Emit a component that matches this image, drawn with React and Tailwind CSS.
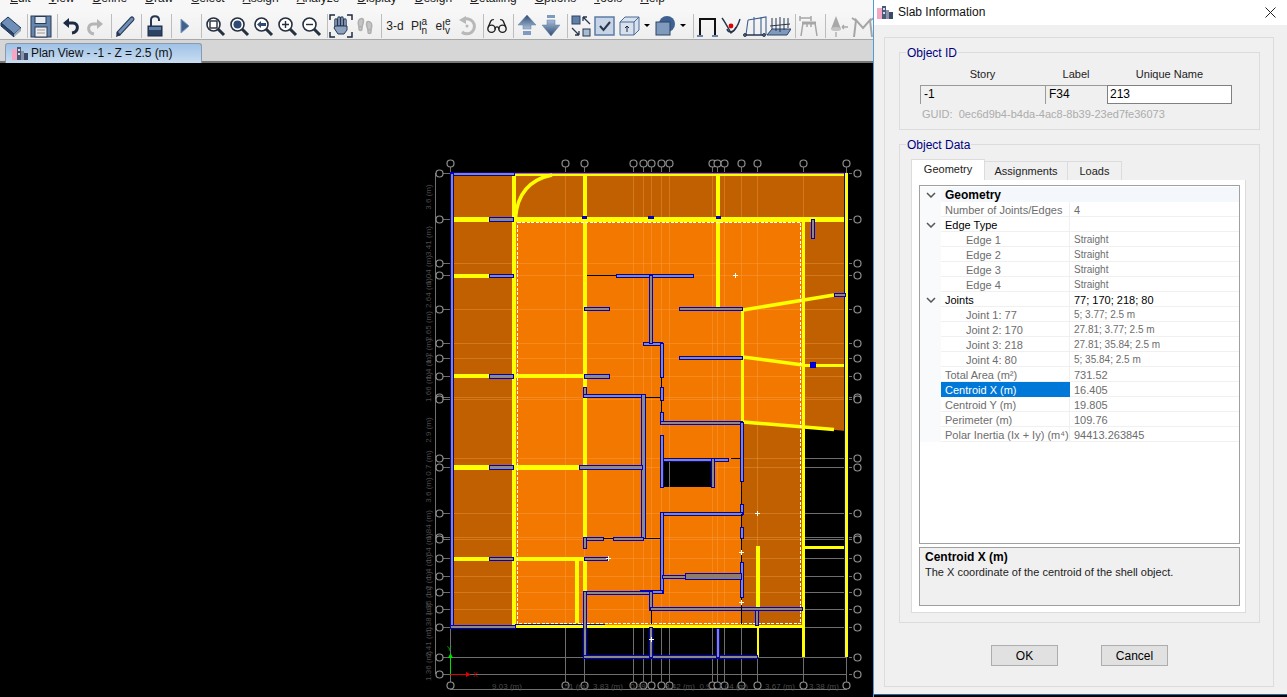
import { Footprints, Glasses } from 'lucide-react';

const font = 'font-["Liberation_Sans",Arial,sans-serif]';

const menus = ['Edit', 'View', 'Define', 'Draw', 'Select', 'Assign', 'Analyze', 'Display', 'Design', 'Detailing', 'Options', 'Tools', 'Help'];

const Sep = () => <div className="w-px h-6 ml-1 mr-px bg-[#bdbdbd] shrink-0" />;

const Tool = ({ children }) => (
  <div className="w-6 h-6 shrink-0 flex items-center justify-center text-[#26364f]">{children}</div>
);

const Ico = ({ children }) => <svg width="24" height="24" viewBox="0 0 24 24" fill="none">{children}</svg>;

const Caret = () => (
  <div className="w-3 h-6 shrink-0 flex items-center justify-center">
    <div className="w-0 h-0 border-x-[3px] border-x-transparent border-t-[3px] border-t-black" />
  </div>
);

const Glass = ({ children }) => (
  <Ico>
    <circle cx="10.5" cy="10.5" r="6.5" fill="#fff" stroke="#26303f" strokeWidth="1.6" />
    <line x1="15" y1="15" x2="21" y2="21" stroke="#26303f" strokeWidth="3" />
    {children}
  </Ico>
);

const Toolbar = () => (
  <div className="h-[27px] flex items-center -ml-px bg-gradient-to-b from-[#f7f7f7] to-[#eeeeee]">
    <Tool><Ico>
      <polygon points="2,9 9,3 22,14 15,20" fill="#6f8eb8" stroke="#1f3557" />
      <polygon points="2,9 2,12 15,23 15,20" fill="#2c456d" stroke="#1f3557" />
      <polygon points="15,20 15,23 22,17 22,14" fill="#9ab" />
    </Ico></Tool>
    <Sep />
    <Tool><Ico>
      <rect x="2" y="2" width="20" height="21" fill="#6686ae" stroke="#2a3b55" />
      <rect x="6" y="2.5" width="11" height="7" fill="#e8edf3" stroke="#2a3b55" />
      <rect x="6" y="13" width="12" height="10" fill="#eeeeee" stroke="#2a3b55" />
      <line x1="8" y1="16" x2="16" y2="16" stroke="#999" />
      <line x1="8" y1="19" x2="16" y2="19" stroke="#999" />
    </Ico></Tool>
    <Sep />
    <Tool><Ico>
      <path d="M8 9 H14 C20 9 20 18 13 19" stroke="#1d2b42" strokeWidth="3" />
      <polygon points="4,9 10,4 10,14" fill="#1d2b42" />
    </Ico></Tool>
    <Tool><Ico>
      <path d="M16 10 H10 C4 10 4 19 11 20" stroke="#b5b5b5" strokeWidth="3" />
      <polygon points="20,10 14,5 14,15" fill="#b5b5b5" />
    </Ico></Tool>
    <Sep />
    <Tool><Ico>
      <line x1="6" y1="19" x2="19" y2="5" stroke="#26364f" strokeWidth="5" strokeLinecap="round" />
      <line x1="6" y1="19" x2="19" y2="5" stroke="#6f8eb8" strokeWidth="3" strokeLinecap="round" />
      <polygon points="3,23 4,17 8,21" fill="#26364f" />
    </Ico></Tool>
    <Sep />
    <Tool><Ico>
      <path d="M8 12 V6 C8 1 16 1 16 6 V7" stroke="#26364f" strokeWidth="2" />
      <rect x="5" y="12" width="14" height="10" fill="#2d4364" stroke="#1b2a40" />
      <rect x="6" y="13" width="12" height="3" fill="#5f7fa8" />
    </Ico></Tool>
    <Sep />
    <Tool><Ico><polygon points="8,5 16,12 8,19" fill="#41628f" stroke="#7f9abd" /></Ico></Tool>
    <Sep />
    <Tool><Glass><rect x="7" y="7" width="7" height="7" stroke="#26303f" strokeWidth="1.4" /></Glass></Tool>
    <Tool><Glass><circle cx="10.5" cy="10.5" r="4" fill="#2f4a73" /></Glass></Tool>
    <Tool><Glass><polygon points="6,10.5 10,7 10,9 15,9 15,12 10,12 10,14" fill="#2f4a73" /></Glass></Tool>
    <Tool><Glass><path d="M7 10.5 H14 M10.5 7 V14" stroke="#26303f" strokeWidth="1.4" /></Glass></Tool>
    <Tool><Glass><path d="M7 10.5 H14" stroke="#26303f" strokeWidth="1.4" /></Glass></Tool>
    <Sep />
    <Tool><Ico>
      <path d="M1 6 V1 H6 M18 1 H23 V6 M1 18 V23 H6 M18 23 H23 V18" stroke="#1d2b42" strokeWidth="1.5" />
      <path d="M7 12 V6 M10 11 V4 M13 11 V4 M16 12 V6" stroke="#26364f" strokeWidth="3.4" strokeLinecap="round" />
      <path d="M7 12 V6 M10 11 V4 M13 11 V4 M16 12 V6" stroke="#8ea3c0" strokeWidth="1.6" strokeLinecap="round" />
      <path d="M6 12 H18 V16 L15 20 H9 L5 14 Z" fill="#8ea3c0" stroke="#26364f" />
    </Ico></Tool>
    <Tool><Footprints size={18} className="text-[#b0b0b0]" fill="#c4c4c4" /></Tool>
    <Sep />
    <Tool><span className="text-[12px] leading-none text-[#222]">3-d</span></Tool>
    <Tool>
      <span className="text-[12px] leading-none text-[#222]">Pl</span>
      <span className="flex flex-col text-[10px] leading-[9px] text-[#222]"><span>a</span><span>n</span></span>
    </Tool>
    <Tool>
      <span className="text-[12px] leading-none text-[#222]">el</span>
      <span className="flex flex-col text-[10px] leading-[9px] text-[#222]"><span>e</span><span>v</span></span>
    </Tool>
    <Tool><Ico>
      <path d="M8 6 A7.5 7.5 0 1 1 7 18" stroke="#b8b8b8" strokeWidth="3" />
      <polygon points="4,6 11,2 11,10" fill="#b8b8b8" />
      <circle cx="12" cy="12" r="1.5" fill="#b8b8b8" />
    </Ico></Tool>
    <Sep />
    <Tool><Glasses size={22} className="text-[#1f1f1f]" strokeWidth={1.5} /></Tool>
    <Sep />
    <Tool><Ico>
      <defs><linearGradient id="up" x1="0" y1="0" x2="0" y2="1"><stop stopColor="#2f4a73" /><stop offset="1" stopColor="#a8bdd8" /></linearGradient></defs>
      <polygon points="12,1 21,11 16,11 16,15 8,15 8,11 3,11" fill="url(#up)" stroke="#5f7fa8" strokeWidth="0.5" />
      <rect x="8" y="17" width="8" height="4" fill="#7f9abd" />
    </Ico></Tool>
    <Tool><Ico>
      <defs><linearGradient id="dn" x1="0" y1="0" x2="0" y2="1"><stop stopColor="#a8bdd8" /><stop offset="1" stopColor="#2f4a73" /></linearGradient></defs>
      <rect x="8" y="1" width="8" height="3" fill="#7f9abd" />
      <polygon points="8,6 16,6 16,11 21,11 12,22 3,11 8,11" fill="url(#dn)" stroke="#5f7fa8" strokeWidth="0.5" />
    </Ico></Tool>
    <Sep />
    <Tool><Ico>
      <rect x="3" y="2" width="8" height="8" fill="#5f7fa8" stroke="#2d4364" />
      <rect x="14" y="15" width="7" height="7" fill="#a9bbd2" stroke="#26364f" />
      <path d="M14 3 L21 10 M14 3 H18 M14 3 V7 M3 14 L10 21 M10 21 H6 M10 21 V17" stroke="#26364f" strokeWidth="1.3" />
    </Ico></Tool>
    <Tool><Ico>
      <rect x="2" y="3" width="19" height="18" fill="#c7d4e6" stroke="#5c7ca6" strokeWidth="1.5" />
      <path d="M7 12 L10.5 16 L17 8" stroke="#26364f" strokeWidth="2" />
    </Ico></Tool>
    <Tool><Ico>
      <path d="M3 8 L8 3 H22 V16 L17 21 H3 Z" fill="#d8e1ec" stroke="#4a6a96" />
      <path d="M3 8 H17 V21 M17 8 L22 3" stroke="#4a6a96" />
      <path d="M10 18 V12 M8 14 L10 12 L12 14" stroke="#1d2b42" />
    </Ico></Tool>
    <Caret />
    <Tool><Ico>
      <circle cx="14" cy="10" r="8" fill="#3e6192" />
      <rect x="3" y="8" width="14" height="13" fill="#7f9abd" stroke="#2d4364" />
    </Ico></Tool>
    <Caret />
    <Sep />
    <Tool><Ico>
      <path d="M5 21 V5 H20 V21" stroke="#111" strokeWidth="2" />
      <path d="M2 22 H8 M17 22 H23" stroke="#3e6192" strokeWidth="1.5" />
    </Ico></Tool>
    <Tool><Ico>
      <path d="M3 4 C6 8 8 12 12 19 C15 17 19 12 21 5" stroke="#26364f" strokeWidth="1.4" />
      <path d="M8 15 C9 19 15 19 17 13" stroke="#26364f" strokeWidth="1.4" />
      <circle cx="12" cy="12" r="2.4" fill="#e00000" />
    </Ico></Tool>
    <Tool><Ico>
      <path d="M3 21 L5 6 M11 21 V6 M18 21 V3 M5 6 L23 3 V21 M11 6 V3" stroke="#3e6192" strokeWidth="1.1" />
      <path d="M1 21 H22" stroke="#26364f" strokeWidth="1.5" />
      <circle cx="2" cy="21" r="1.5" stroke="#26364f" />
      <circle cx="21" cy="21" r="1.5" stroke="#26364f" />
    </Ico></Tool>
    <Tool><Ico>
      <polygon points="0,21 5,15 24,15 20,21" fill="#7f9abd" stroke="#2d4364" />
      <path d="M5 4 V15 M9 4 V17 M13 3 V18 M17 4 V16 M21 4 V14 M3 12 L23 10" stroke="#26364f" />
    </Ico></Tool>
    <Sep />
    <Tool><Ico>
      <path d="M4 22 L6 9 H18 L20 22 M10 9 V13 M14 9 V13 M3 2 V7 M3 4 H14 M14 2 V7" stroke="#a6a6a6" strokeWidth="1.5" />
      <path d="M5 9 H19" stroke="#a6a6a6" strokeWidth="3" />
    </Ico></Tool>
    <Sep />
    <Tool><Ico>
      <polygon points="9,2 14,15 4,15" fill="#a8a8a8" />
      <ellipse cx="9" cy="15" rx="5" ry="2" fill="#c4c4c4" />
      <path d="M21 13 H15 M9 18 V23 M15 13 L17 11 M15 13 L17 15" stroke="#a8a8a8" strokeWidth="1.3" />
    </Ico></Tool>
    <Tool><Ico>
      <path d="M3 23 L5 6 L12 14 L19 6 L21 23 M1 4 L7 8 M23 4 L17 8" stroke="#a6a6a6" strokeWidth="2" />
    </Ico></Tool>
  </div>
);

const gridX = [450.5, 565.5, 584.5, 633.5, 643.5, 651.5, 661.5, 669.5, 712.5, 717.5, 724.5, 741.5, 757.5, 803.5, 846.5];
const gridY = [173.5, 219.5, 263.5, 275.5, 309.5, 343.5, 358.5, 376.5, 397.5, 399.5, 458.5, 467.5, 513.5, 537.5, 539.5, 558.5, 576.5, 592.5, 609.5, 627.5, 657.5, 674.5];
const leftDims = [
  ['3.6 (m)', 197], ['3.41 (m)', 241], ['1.04 (m)', 270], ['2.64 (m)', 293], ['2.65 (m)', 326], ['1.2 (m)', 351],
  ['1.4 (m)', 367], ['1.66 (m)', 387], ['2.9 (m)', 430], ['0.7 (m)', 463], ['3.6 (m)', 490], ['1.84 (m)', 525],
  ['1.64 (m)', 548], ['1.4 (m)', 567], ['1.2 (m)', 584], ['1.35 (m)', 601], ['1.38 (m)', 618], ['2.41 (m)', 642], ['1.36 (m)', 666],
];
const bottomDims = [['9.03 (m)', 507], ['.51 (m)', 575], ['3.83 (m)', 608], ['0.99', 638], ['3.42 (m)', 680], ['0.9', 705], ['1.04 (m)', 733], ['3.67 (m)', 780], ['3.38 (m)', 824]];

// x, y, w, h
const walls = [
  [450, 172, 64, 3], [450, 173, 3, 454], [450, 625, 65, 3],
  [489, 217, 24, 4], [489, 274, 24, 3], [489, 374, 24, 4], [489, 465, 24, 4], [489, 557, 24, 3],
  [616, 274, 77, 3], [584, 307, 25, 3], [584, 374, 25, 4], [643, 342, 19, 3], [649, 275, 3, 68],
  [583, 387, 3, 10], [583, 394, 62, 3], [641, 394, 4, 144], [660, 343, 3, 34], [660, 387, 3, 13], [660, 412, 3, 10],
  [660, 421, 82, 3], [740, 422, 3, 59], [740, 504, 3, 10], [740, 527, 3, 11], [740, 562, 3, 35],
  [663, 458, 65, 3], [711, 458, 3, 29], [660, 435, 3, 52], [660, 512, 82, 3], [660, 512, 3, 81],
  [662, 575, 23, 3], [640, 590, 22, 3], [583, 591, 67, 3], [649, 591, 3, 19], [650, 607, 152, 3],
  [583, 591, 3, 67], [583, 655, 174, 3], [649, 627, 3, 30], [716, 628, 3, 29], [755, 610, 3, 15],
  [679, 307, 63, 3], [679, 356, 63, 3], [811, 219, 3, 19], [834, 293, 11, 3],
  [584, 537, 19, 3], [613, 537, 30, 3], [583, 537, 3, 11], [584, 557, 23, 3], [579, 465, 63, 4],
];

const blackLines = [
  [587, 275.5, 616, 275.5], [645, 538.5, 660, 538.5], [645, 397.5, 660, 397.5], [661.5, 377, 661.5, 387], [661.5, 400, 661.5, 412],
  [731, 458.5, 740, 458.5], [741.5, 481, 741.5, 504], [741.5, 514, 741.5, 527], [741.5, 538, 741.5, 562], [741.5, 597, 741.5, 624],
  [651.5, 610, 651.5, 624], [603, 538.5, 613, 538.5],
];

const pluses = [[735, 275], [757, 513], [741, 552], [741, 602], [608, 558], [651, 639]];

const Drawing = () => (
  <svg width="873" height="634" viewBox="0 63 873 634" className="block" fontFamily="Liberation Sans, sans-serif">
    <defs>
      <clipPath id="slab">
        <path d="M450 173H846V431L803 427V627H450Z" />
      </clipPath>
    </defs>

    {/* base grid, shows on black */}
    <g stroke="#6e6e6e" shapeRendering="crispEdges">
      {gridX.map((x) => <line key={x} x1={x} y1={167} x2={x} y2={690} />)}
      {gridY.map((y) => <line key={y} x1={436} y1={y} x2={846} y2={y} />)}
      {gridY.map((y) => <line key={y} x1={849} y1={y} x2={852} y2={y} />)}
      <line x1={435.5} y1={173} x2={435.5} y2={674} />
      <line x1={450} y1={689.5} x2={846} y2={689.5} />
    </g>

    {/* slabs */}
    <path d="M450 173H846V431L803 427V627H450Z" fill="#c06000" />
    <rect x="515" y="221" width="288" height="404" fill="#f27800" />
    <path d="M742 422L803 427V627H742Z" fill="#c06000" />

    {/* grid over slabs */}
    <g stroke="#ffb060" strokeOpacity="0.3" shapeRendering="crispEdges" clipPath="url(#slab)">
      {gridX.map((x) => <line key={x} x1={x} y1={173} x2={x} y2={627} />)}
      {gridY.map((y) => <line key={y} x1={450} y1={y} x2={846} y2={y} />)}
    </g>
    <rect x="663" y="460" width="48" height="27" fill="#000" />
    <line x1="669.5" y1="460" x2="669.5" y2="487" stroke="#6e6e6e" />

    {/* beams */}
    <g stroke="#ffff00" fill="none" shapeRendering="crispEdges">
      <path d="M514 175V627" strokeWidth="4" />
      <path d="M450 219H489M515 219H844" strokeWidth="5" />
      <path d="M450 276H489M450 376H489M515 376H584" strokeWidth="4" />
      <path d="M450 467.5H489M515 467.5H580" strokeWidth="5" />
      <path d="M450 559H489M515 559H585" strokeWidth="4" />
      <path d="M584.5 175V537M584.5 558V591" strokeWidth="4" />
      <path d="M576.5 560V623" strokeWidth="4" />
      <path d="M717.5 175V309" strokeWidth="4" />
      <path d="M742 310V421" strokeWidth="3" />
      <path d="M803.5 219V657" strokeWidth="3" />
      <path d="M757.5 546V609" strokeWidth="4" />
      <path d="M757.5 609V657" strokeWidth="2" />
      <path d="M846.5 173V657" strokeWidth="3" />
      <path d="M803 365.5H844M805 547.5H844" strokeWidth="3.5" />
      <path d="M515 626.5H803" strokeWidth="3" />
      <path d="M514 174.5H845" strokeWidth="2" />
    </g>
    <g stroke="#ffff00" fill="none">
      <path d="M515.5 218Q518 182 552 175" strokeWidth="3.5" />
      <path d="M743 310L834 295" strokeWidth="3.5" />
      <path d="M743 357L803 365" strokeWidth="3.5" />
      <path d="M743 422L834 429.5" strokeWidth="3.5" />
    </g>

    {/* dashed slab edge */}
    <path d="M517.5 222H800.5V623.5H517.5Z" stroke="#fff" strokeDasharray="3 1.5" fill="none" shapeRendering="crispEdges" />

    {/* walls */}
    <g fill="#8a8a8a" stroke="#0000c0" shapeRendering="crispEdges">
      <path d="M514 172.5H846M844.5 173V657M515 624.5H605" fill="none" />
      {walls.map(([x, y, w, h], i) => <rect key={i} x={x + 0.5} y={y + 0.5} width={w} height={h} />)}
      <rect x="685.5" y="573.5" width="56" height="6" fill="#8c7c6a" />
      <rect x="648" y="216" width="5" height="2" fill="#0000e0" />
      <rect x="716" y="216" width="4" height="2" fill="#0000e0" />
      <rect x="810" y="362" width="5" height="5" fill="#0000e0" />
      <rect x="582" y="216" width="4" height="2" fill="#0000e0" />
    </g>
    <g stroke="#000" shapeRendering="crispEdges">
      {blackLines.map(([x1, y1, x2, y2], i) => <line key={i} x1={x1} y1={y1} x2={x2} y2={y2} />)}
    </g>
    <g stroke="#fff" shapeRendering="crispEdges">
      {pluses.map(([x, y]) => <path key={x + '-' + y} d={`M${x - 2.5} ${y + 0.5}H${x + 3}M${x + 0.5} ${y - 2.5}V${y + 3}`} fill="none" />)}
    </g>

    {/* grid bubbles */}
    <g fill="#000" stroke="#909090" strokeWidth="1.2">
      {gridX.map((x) => <circle key={x} cx={x} cy={163.5} r={3.5} />)}
      {gridX.map((x) => <circle key={x} cx={x} cy={685.5} r={3.5} />)}
      {gridY.map((y) => <circle key={y} cx={439.5} cy={y} r={3.5} />)}
      {gridY.map((y) => <circle key={y} cx={857.5} cy={y} r={3.5} />)}
    </g>

    {/* dimensions */}
    <g fill="#4c4c4c" fontSize="8">
      {leftDims.map(([t, y], i) => (
        <text key={i} x={431} y={y} textAnchor="middle" transform={`rotate(-90 431 ${y})`}>{t}</text>
      ))}
      {bottomDims.map(([t, x], i) => <text key={i} x={x} y={689} textAnchor="middle">{t}</text>)}
    </g>

    {/* axes */}
    <path d="M450.5 674V657" stroke="#00e000" shapeRendering="crispEdges" />
    <polygon points="450.5,653 448,658 453,658" fill="#00e000" />
    <text x="447" y="651" fontSize="7" fill="#00b000">Y</text>
    <path d="M450 674.5H467" stroke="#e00000" shapeRendering="crispEdges" />
    <polygon points="471,674.5 466,672 466,677" fill="#e00000" />
    <text x="473" y="677" fontSize="7" fill="#c00000">X</text>
  </svg>
);

const rows = [
  { k: 'Geometry', bold: true, chev: true, first: true },
  { k: 'Number of Joints/Edges', v: '4' },
  { k: 'Edge Type', dark: true, chev: true },
  { k: 'Edge 1', v: 'Straight', sub: true },
  { k: 'Edge 2', v: 'Straight', sub: true },
  { k: 'Edge 3', v: 'Straight', sub: true },
  { k: 'Edge 4', v: 'Straight', sub: true },
  { k: 'Joints', v: '77; 170; 218; 80', dark: true, chev: true },
  { k: 'Joint 1: 77', v: '5; 3.77; 2.5 m', sub: true },
  { k: 'Joint 2: 170', v: '27.81; 3.77; 2.5 m', sub: true },
  { k: 'Joint 3: 218', v: '27.81; 35.84; 2.5 m', sub: true },
  { k: 'Joint 4: 80', v: '5; 35.84; 2.5 m', sub: true },
  { k: 'Total Area (m²)', v: '731.52' },
  { k: 'Centroid X (m)', v: '16.405', selected: true },
  { k: 'Centroid Y (m)', v: '19.805' },
  { k: 'Perimeter (m)', v: '109.76' },
  { k: 'Polar Inertia (Ix + Iy) (m⁴)', v: '94413.263845' },
];

const PropRow = ({ k, v, bold, chev, sub, dark, selected, first }) => (
  <div className={`flex h-[15px] text-[11px] leading-4 ${first ? 'bg-[#f4f7fb]' : ''}`}>
    <div className="w-[21px] shrink-0 bg-[#f8fafc] flex items-center justify-center">
      {chev && (
        <svg width="10" height="6" viewBox="0 0 10 6" fill="none">
          <path d="M1 1 L5 5 L9 1" stroke="#555" strokeWidth="1.5" />
        </svg>
      )}
    </div>
    <div
      className={`w-[129px] h-[15px] shrink-0 whitespace-nowrap border-b border-r ${sub ? 'pl-[25px]' : 'pl-1'} ${
        selected ? 'bg-[#0078d7] text-white border-[#0078d7]' : 'border-[#f0f0f0]'
      } ${bold ? 'font-bold text-black text-[12px] border-transparent' : dark ? 'text-black' : selected ? '' : 'text-[#6d6d6d]'}`}
    >
      {k}
    </div>
    <div className={`flex-1 h-[15px] pl-1 whitespace-nowrap border-b ${first ? 'border-transparent' : 'border-[#f0f0f0]'} ${dark ? 'text-black' : 'text-[#6d6d6d]'} ${sub ? 'text-[10px]' : ''}`}>
      {v}
    </div>
  </div>
);

const Legend = ({ children }) => (
  <div className="absolute -top-[7px] left-1.5 bg-[#f0f0f0] px-px text-[12px] leading-[14px] text-[#00007f]">{children}</div>
);

const SlabIcon = () => (
  <svg width="16" height="14" viewBox="0 0 16 14">
    <rect x="0" y="3" width="6" height="11" fill="#f4a6c4" />
    <rect x="5" y="1" width="4" height="13" fill="#4a5a7a" />
    <rect x="9" y="5" width="3" height="9" fill="#8a94a8" />
    <rect x="12" y="7" width="4" height="7" fill="#3d4a66" />
    <rect x="6" y="3" width="2" height="2" fill="#d8dce4" />
    <rect x="6" y="7" width="2" height="2" fill="#d8dce4" />
  </svg>
);

const Dialog = () => (
  <div className="w-[413px] shrink-0 h-[694px] bg-[#f0f0f0] text-black">
    <div className="h-[25px] bg-white flex items-center pl-[3px] pr-[11px] pb-px">
      <SlabIcon />
      <span className="ml-[5px] text-[12px] text-[#111]">Slab Information</span>
      <svg width="11" height="11" viewBox="0 0 11 11" className="ml-auto" fill="none">
        <path d="M0.5 0.5 L10.5 10.5 M10.5 0.5 L0.5 10.5" stroke="#222" />
      </svg>
    </div>

    <div className="ml-2.5 mt-3 w-[390px] h-[650px] border border-[#dcdcdc] px-[14px] pt-[14px]">
      <div className="relative w-[361px] h-[78px] border border-[#dcdcdc]">
        <Legend>Object ID</Legend>
        <div className="ml-5 mt-[14px] w-[312px]">
          <div className="grid grid-cols-[125px_62px_125px] text-[11px] leading-[14px] text-center text-[#222]">
            <div>Story</div>
            <div>Label</div>
            <div>Unique Name</div>
          </div>
          <div className="grid grid-cols-[125px_62px_125px] mt-1 text-[12px] h-[19px] leading-[17px]">
            <div className="border-t border-l border-[#9a9a9a] pl-[3px]">-1</div>
            <div className="border-t border-l border-[#9a9a9a] pl-[3px]">F34</div>
            <div className="border border-[#808080] bg-white pl-[2px]">213</div>
          </div>
          <div className="mt-[3px] ml-0.5 text-[11px] leading-[14px] text-[#acacac]">GUID:&nbsp; 0ec6d9b4-b4da-4ac8-8b39-23ed7fe36073</div>
        </div>
      </div>

      <div className="relative w-[361px] h-[479px] mt-[14px] border border-[#dcdcdc]">
        <Legend>Object Data</Legend>
        <div className="ml-[11px] mt-[14px]">
          <div className="flex items-end h-[21px] text-[11px] text-[#222]">
            <div className="w-[74px] h-[21px] bg-white border border-b-0 border-[#dcdcdc] flex items-center justify-center pb-0.5">Geometry</div>
            <div className="w-[83px] h-[19px] border-t border-r border-[#dcdcdc] flex items-center justify-center">Assignments</div>
            <div className="w-[54px] h-[19px] border-t border-r border-[#dcdcdc] flex items-center justify-center">Loads</div>
          </div>
          <div className="w-[335px] h-[433px] bg-white border border-t-0 border-[#dcdcdc] pl-[7px] pt-[5px]">
            <div className="w-[321px] h-[359px] border border-[#a0a0a0] bg-white pt-px">
              {rows.map((r) => <PropRow key={r.k} {...r} />)}
            </div>
            <div className="w-[321px] h-[59px] mt-[3px] border border-[#a0a0a0] bg-[#f0f0f0] pl-[5px] pt-[2px] text-[11px] leading-[15px]">
              <div className="font-bold text-[12px]">Centroid X (m)</div>
              <div className="text-[#222]">The X coordinate of the centroid of the shell object.</div>
            </div>
          </div>
        </div>
      </div>

      <div className="flex mt-[22px] ml-[92px] gap-[43px] text-[12px]">
        <div className="w-[67px] h-[21px] bg-[#e1e1e1] border border-[#adadad] flex items-center justify-center">OK</div>
        <div className="w-[67px] h-[21px] bg-[#e1e1e1] border border-[#adadad] flex items-center justify-center">Cancel</div>
      </div>
    </div>
  </div>
);

export default function App() {
  return (
    <div className={`w-[1287px] h-[697px] overflow-hidden bg-black flex ${font}`}>
      <div className="w-[873px] shrink-0 overflow-hidden">
        <div className="h-3 bg-[#f7f7f7] overflow-hidden">
          <div className="flex gap-[18px] pl-2.5 -mt-[10px] text-[12px] leading-4 text-[#222]">
            {menus.map((m) => <span key={m}><u>{m[0]}</u>{m.slice(1)}</span>)}
          </div>
        </div>
        <Toolbar />
        <div className="h-6 bg-[#d6d6d6] border-t border-[#a8a8a8] border-b-2 border-b-[#777] flex items-end pl-[5px]">
          <div className="w-[197px] h-5 -mb-[2px] rounded-t-[3px] border border-b-0 border-[#8a9bb0] bg-gradient-to-b from-[#9fc2e6] to-[#c9ddf1] flex items-center pl-1.5 pb-0.5">
            <SlabIcon />
            <span className="ml-[3px] text-[12px] leading-4 tracking-[-0.1px] text-[#111] whitespace-nowrap">Plan View - -1 - Z = 2.5 (m)</span>
          </div>
        </div>
        <Drawing />
      </div>
      <div className="w-px h-[697px] bg-[#4f9bd9] shrink-0" />
      <div>
        <Dialog />
        <div className="h-px bg-[#1f6aa5]" />
      </div>
    </div>
  );
}
